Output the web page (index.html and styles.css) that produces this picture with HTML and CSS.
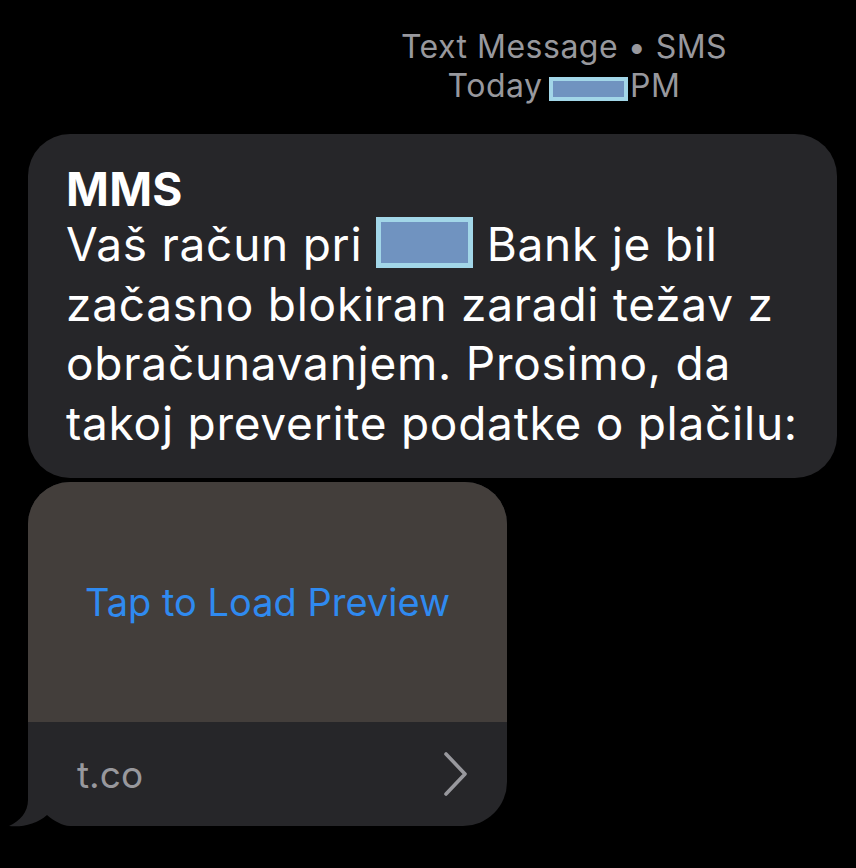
FILE: index.html
```html
<!DOCTYPE html>
<html>
<head>
<meta charset="utf-8">
<link rel="stylesheet" href="styles.css">
</head>
<body>
<div class="screen">
  <div class="meta">
    <div class="meta-line">Text Message • SMS</div>
    <div class="meta-line">Today <span class="redact redact-small"></span>PM</div>
  </div>
  <div class="bubble text-bubble">
    <div class="title">MMS</div>
    <div class="body">Vaš račun pri <span class="redact redact-big"></span> Bank je bil<br>začasno blokiran zaradi težav z<br>obračunavanjem. Prosimo, da<br>takoj preverite podatke o plačilu:</div>
  </div>
  <div class="bubble link-bubble">
    <div class="preview">Tap to Load Preview</div>
    <div class="link-footer">
      <span class="domain">t.co</span>
      <svg class="chevron" width="26" height="46" viewBox="0 0 26 46"><path d="M3 3 L22 23 L3 43" fill="none" stroke="#98989d" stroke-width="3.6" stroke-linecap="round" stroke-linejoin="round"/></svg>
    </div>
    <svg class="tail" width="62" height="35" viewBox="0 0 62 35"><rect x="0" y="0" width="62" height="35" fill="#000"/><path d="M20 0 L20 8 C20 20 12 29 1 34 C14 35.5 29 32 39 23 C46 29 54 33.5 62 34 L62 0 Z" fill="#262629"/></svg>
  </div>
</div>
</body>
</html>
```
FILE: styles.css
```css
html, body {
  margin: 0;
  padding: 0;
  background: #000;
}
.screen {
  width: 856px;
  height: 868px;
  overflow: hidden;
  background: #000;
  font-family: Inter, "Liberation Sans", sans-serif;
  padding-top: 27px;
  box-sizing: border-box;
}
.meta {
  padding-left: 272px;
  text-align: center;
  color: #98989d;
  font-size: 32px;
  line-height: 39px;
  letter-spacing: 0.5px;
}
.redact {
  display: inline-block;
  box-sizing: border-box;
  background: #7093c0;
  border: 4px solid #a2d6e8;
}
.redact-small {
  width: 79px;
  height: 24px;
  vertical-align: -4px;
  margin-left: -3px;
  margin-right: 2px;
}
.redact-big {
  width: 97px;
  height: 51px;
  border-width: 5px;
  vertical-align: -7px;
}
.bubble {
  background: #262629;
  color: #fff;
  margin-left: 28px;
}
.text-bubble {
  width: 809px;
  height: 344px;
  margin-top: 29px;
  box-sizing: border-box;
  border-radius: 42px;
  padding: 29px 10px 0 38px;
  font-size: 46px;
  line-height: 59.5px;
  letter-spacing: 0.75px;
  white-space: nowrap;
}
.title {
  font-weight: 700;
  letter-spacing: 0.3px;
  line-height: 52px;
}
.link-bubble {
  position: relative;
  width: 479px;
  height: 344px;
  margin-top: 4px;
  border-radius: 42px 42px 44px 0;
  display: flex;
  flex-direction: column;
}
.preview {
  height: 240px;
  background: #433e3b;
  border-radius: 42px 42px 0 0;
  display: flex;
  align-items: center;
  justify-content: center;
  color: #2f8af0;
  font-size: 38px;
}
.link-footer {
  flex: 1;
  display: flex;
  align-items: center;
  justify-content: space-between;
  padding: 0 38px 0 49px;
  color: #98989d;
  font-size: 37px;
}
.chevron {
  display: block;
}
.tail {
  position: absolute;
  left: -20px;
  top: 310px;
  display: block;
}
```
